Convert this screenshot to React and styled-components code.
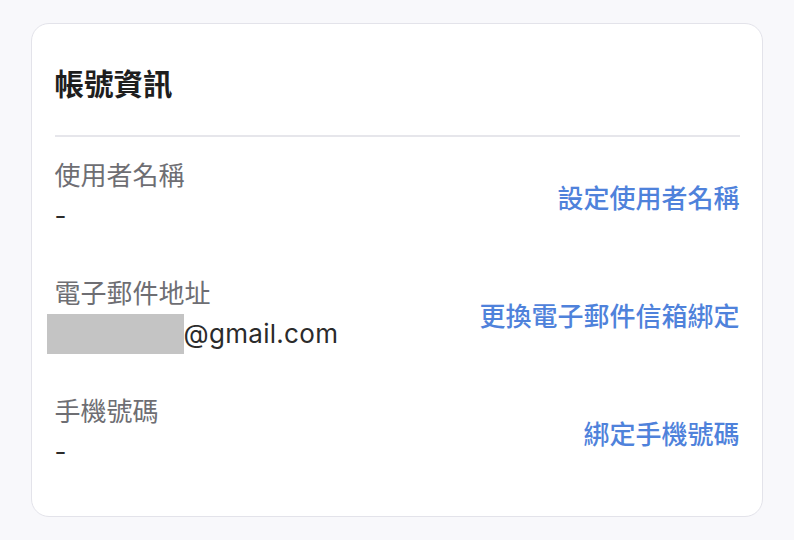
import React from "react";
import styled, { createGlobalStyle } from "styled-components";

const GlobalStyle = createGlobalStyle`
  html, body {
    margin: 0;
    padding: 0;
    background: #f8f8fb;
  }
  body {
    font-family: "Inter", "Noto Sans CJK TC", sans-serif;
  }
`;

const Page = styled.div`
  padding: 23px 31px;
  height: 540px;
  box-sizing: border-box;
`;

const Card = styled.div`
  background: #ffffff;
  border: 1.5px solid #e3e3ea;
  border-radius: 18px;
  padding: 40px 22.5px 44px;
`;

const Title = styled.h2`
  margin: 0;
  font-size: 29.5px;
  line-height: 40px;
  font-weight: 700;
  color: #1e1e1e;
  padding-bottom: 31px;
  border-bottom: 2px solid #e6e6eb;
`;

const List = styled.div`
  display: flex;
  flex-direction: column;
  gap: 38px;
  padding-top: 19px;
`;

const Row = styled.div`
  display: flex;
  align-items: center;
  justify-content: space-between;
`;

const Info = styled.div`
  display: flex;
  flex-direction: column;
`;

const Label = styled.div`
  font-size: 26px;
  line-height: 40px;
  color: #6e6e73;
`;

const Value = styled.div`
  font-size: 26px;
  line-height: 40px;
  color: #2b2b2b;
  display: flex;
  align-items: center;
  letter-spacing: 0.3px;
`;

const Redacted = styled.span`
  display: inline-block;
  width: 137px;
  height: 40px;
  margin-left: -8px;
  background: #c4c4c4;
`;

const Action = styled.a`
  font-size: 26px;
  line-height: 40px;
  font-weight: 500;
  color: #4f82db;
  text-decoration: none;
  cursor: pointer;
  margin-top: 5px;
`;

const rows = [
  { label: "使用者名稱", value: "-", action: "設定使用者名稱" },
  { label: "電子郵件地址", value: "@gmail.com", hidden: true, action: "更換電子郵件信箱綁定" },
  { label: "手機號碼", value: "-", action: "綁定手機號碼" },
];

export default function App() {
  return (
    <>
      <GlobalStyle />
      <Page>
        <Card>
          <Title>帳號資訊</Title>
          <List>
            {rows.map((r) => (
              <Row key={r.label}>
                <Info>
                  <Label>{r.label}</Label>
                  <Value>
                    {r.hidden && <Redacted />}
                    {r.value}
                  </Value>
                </Info>
                <Action>{r.action}</Action>
              </Row>
            ))}
          </List>
        </Card>
      </Page>
    </>
  );
}
